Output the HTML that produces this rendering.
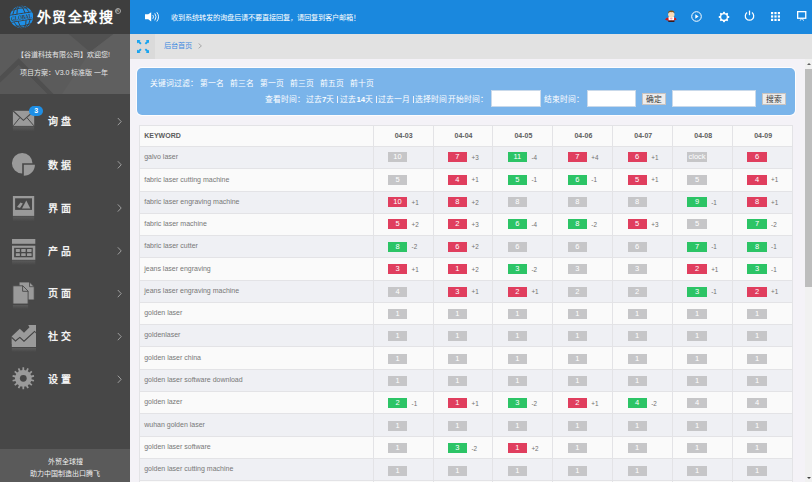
<!DOCTYPE html>
<html lang="zh-CN"><head><meta charset="utf-8"><style>
*{margin:0;padding:0;box-sizing:border-box}
html,body{width:812px;height:482px;overflow:hidden;background:#f4f2f7;font-family:"Liberation Sans",sans-serif;position:relative}
.abs{position:absolute}
/* sidebar */
.logo{position:absolute;left:0;top:0;width:130px;height:34px;background:#3e3e3e}
.logo .t{position:absolute;left:36.5px;top:7.5px;font-family:"Liberation Serif",serif;font-weight:bold;font-size:14px;line-height:20px;color:#fff;letter-spacing:1.6px;white-space:nowrap}
.logo .reg{position:absolute;left:114.5px;top:7.5px;width:6px;height:6px;border:0.8px solid #aaa;border-radius:50%;font-size:4px;line-height:4.5px;text-align:center;color:#aaa;font-weight:bold}
.side{position:absolute;left:0;top:34px;width:130px;height:448px;background:#474747;overflow:hidden}
.uinfo{position:absolute;left:0;top:0;width:130px;height:60px;background:#5b5b5b;overflow:hidden}
.uinfo .l{position:absolute;left:0;width:130px;text-align:center;font-size:7px;color:#e6e6e6;white-space:nowrap}
.menu{position:absolute;left:0;width:130px;height:43px}
.menu .ico{position:absolute;left:12px;top:10px;width:24px;height:24px}
.menu .tx{position:absolute;left:48px;top:15px;font-size:10px;color:#f2f2f2;letter-spacing:3px;white-space:nowrap;font-weight:bold}
.menu .chev{position:absolute;left:116px;top:18px;width:6px;height:8px}
.sfoot{position:absolute;left:0;top:415px;width:130px;height:33px;background:#5a5a5a}
.sfoot .l{position:absolute;left:0;width:130px;text-align:center;font-size:7px;color:#f0f0f0;white-space:nowrap}
.badge3{position:absolute;left:29.1px;top:105.6px;width:14px;height:10.4px;border-radius:5.2px;background:#1e8fe6;color:#fff;font-size:7px;text-align:center;line-height:10.4px;font-weight:bold}
/* header */
.hdrbar{position:absolute;left:130px;top:0;width:682px;height:34px;background:#1a88de}
.notice{position:absolute;left:41px;top:11.5px;font-size:7.2px;color:#fff;white-space:nowrap}
.crumb{position:absolute;left:130px;top:34px;width:682px;height:25px;background:#e2e2e2}
.crumb .ib{position:absolute;left:0;top:0;width:25px;height:25px;background:#dadada}
.crumb .tx{position:absolute;left:34px;top:6.4px;font-size:7.2px;color:#3d8ae0;white-space:nowrap}
/* panel */
.panel{position:absolute;left:137.4px;top:68.4px;width:657.6px;height:47px;background:#7ab4ea;border-radius:5px;box-shadow:0 0 0 1px rgba(255,255,255,0.85)}
.pt{position:absolute;font-size:7.8px;line-height:11.2px;color:#fff;white-space:nowrap}
.pt b{font-weight:bold}
.inp{position:absolute;background:#fff;border:1px solid #c9d9ea}
.btn{position:absolute;background:#ececec;border:1px solid #c9c3c0;font-size:7.8px;color:#3a3a3a;text-align:center;line-height:9.6px;padding-top:1.3px}
/* table */
.table{position:absolute;left:138.6px;top:0;width:653px;height:482px}
.trow{position:absolute;left:0;width:654px;border-top:1px solid #e3e3e6;border-left:1px solid #e3e3e6;border-right:1px solid #e3e3e6}
.trow.hdr{background:#fafafa}
.trow.odd{background:#eff0f4}
.trow.even{background:#fafafa}
.kw{position:absolute;left:4.6px;top:-1.6px;bottom:0;display:flex;align-items:center;font-size:7px;color:#777;white-space:nowrap}
.kwh{font-weight:bold;color:#5c5c5c;top:-0.6px}
.dc{position:absolute;top:-1px;bottom:0;width:60px;border-left:1px solid #e3e3e6}
.dh{position:absolute;left:0;width:60px;top:0;bottom:0;display:flex;align-items:center;justify-content:center;font-size:7px;font-weight:bold;color:#5c5c5c}
.b{position:absolute;left:14.3px;top:6px;width:19.2px;height:10px;font-size:7.5px;color:#fff;text-align:center;line-height:10px}
.b.r{background:#e03e5e}
.b.G{background:#2cc466}
.b.g{background:#c6c6c8}
.dl{position:absolute;left:38px;top:6.8px;font-size:6.3px;color:#707070;line-height:10.4px}

/* scrollbar */
.sb{position:absolute;left:804.5px;top:59px;width:7.5px;height:423px;background:#f1f1f1;overflow:hidden}
.sbthumb{position:absolute;left:0.8px;top:10px;width:8px;height:218px;background:#bdbdbd}
.sbup{position:absolute;left:2.5px;top:3.8px;width:0;height:0;border-left:2.6px solid transparent;border-right:2.6px solid transparent;border-bottom:2.8px solid #606060}
.sbdn{position:absolute;left:2.5px;top:417.8px;width:0;height:0;border-left:2.6px solid transparent;border-right:2.6px solid transparent;border-top:2.8px solid #404040}

.mtx{position:absolute;left:47.5px;font-size:10px;line-height:14.5px;color:#f2f2f2;letter-spacing:3.5px;white-space:nowrap;font-weight:bold}

.sep{position:absolute;top:96.3px;width:0.9px;height:6.6px;background:#f4f0f6}

</style></head><body>
<div class="logo">
 <svg class="abs" style="left:0;top:0" width="40" height="34" viewBox="0 0 40 34"><defs><clipPath id="gc"><ellipse cx="21.5" cy="17" rx="11.6" ry="11.2"/></clipPath></defs><g transform="rotate(-9 21.5 17)"><ellipse cx="21.5" cy="17" rx="11.6" ry="11.2" fill="#1e90e8"/><g clip-path="url(#gc)" stroke="#3e3e3e" stroke-width="0.9" fill="none"><path d="M8 9.5 Q21.5 6.5 35 9.5"/><path d="M8 24.5 Q21.5 27.5 35 24.5"/><path d="M8 13.6 H35"/><path d="M8 20.6 H35"/><ellipse cx="21.5" cy="17" rx="4.2" ry="11.2"/><ellipse cx="21.5" cy="17" rx="8.6" ry="11.2"/></g><rect x="9" y="14" width="25" height="6.2" fill="#1e90e8" clip-path="url(#gc)"/><text x="21.5" y="19.6" font-size="6.6" font-family="Liberation Serif" font-weight="bold" text-anchor="middle" fill="#3e3e3e" textLength="21" lengthAdjust="spacingAndGlyphs">GLOBAL</text></g></svg>
 <div class="t">外贸全球搜</div><div class="reg">R</div>
</div>
<div class="side">
 <div class="uinfo">
  <svg class="abs" style="left:0;top:0" width="130" height="60" viewBox="0 34 130 60"><rect x="0" y="34" width="130" height="60" fill="#5b5b5b"/><polygon points="68.7,34 113.6,34 90,52" fill="#525252"/><polygon points="113.6,34 130,34 130,94 62,94 90,52" fill="#5f5f5f"/><polygon points="0,76.3 18.7,58.3 53.5,94 47,94 18.7,65 0,83" fill="#4f4f4f"/><polygon points="0,83 18.7,65 47,94 0,94" fill="#585858"/></svg>
  <div class="l" style="top:15px;left:-1.6px">【谷道科技有限公司】欢迎您!</div>
  <div class="l" style="top:33px;left:-0.8px">项目方案：V3.0 标准版 一年</div>
 </div>
 <div class="sfoot">
  <div class="l" style="top:7px">外贸全球搜</div>
  <div class="l" style="top:19px">助力中国制造出口腾飞</div>
 </div>
</div>
<svg class="abs" style="left:0;top:0" width="130" height="482" viewBox="0 0 130 482">
<defs><linearGradient id="rf" x1="0" y1="0" x2="0" y2="1"><stop offset="0" stop-color="#5a5a5a"/><stop offset="1" stop-color="#474747"/></linearGradient></defs>
<!-- envelope -->
<rect x="12.9" y="110.8" width="21.3" height="15.1" fill="#9a9a9a"/>
<path d="M13.2 111 L23.4 120.3 L33.9 111" stroke="#474747" stroke-width="1.1" fill="none"/>
<path d="M13.2 125.8 L20 117.5 M33.9 125.8 L26.8 117.5" stroke="#474747" stroke-width="1" fill="none"/>
<rect x="12.9" y="126.5" width="21.3" height="5" fill="url(#rf)"/>
<!-- pie -->
<path d="M22.2 163.2 V173.5 A10.3 10.3 0 1 1 32.5 163.2 Z" fill="#9a9a9a"/>
<path d="M23.8 164.7 H34.9 A11.1 11.1 0 0 1 23.8 175.8 Z" fill="#9a9a9a"/>
<!-- picture -->
<rect x="12.9" y="196" width="21.3" height="19.9" fill="#9a9a9a"/>
<rect x="15.1" y="198.3" width="16.9" height="11.6" fill="#474747"/>
<path d="M17 207 L20.5 202.5 L22.8 203.5 L20 208 Z" fill="#9a9a9a"/>
<path d="M22 208.4 L26.3 200.4 L30.3 208.4 Z" fill="#9a9a9a"/>
<rect x="12.9" y="216.5" width="21.3" height="5" fill="url(#rf)"/>
<!-- calendar -->
<rect x="12" y="239" width="23.3" height="4.8" fill="#9a9a9a"/>
<rect x="12" y="245.7" width="23.3" height="14.1" fill="#9a9a9a"/>
<rect x="14.1" y="247.8" width="18.7" height="9.5" fill="#474747"/>
<g fill="#9a9a9a"><rect x="15.8" y="249" width="4.1" height="2.9" rx="0.6"/><rect x="21.2" y="249" width="4.5" height="2.9" rx="0.6"/><rect x="27" y="249" width="4.6" height="2.9" rx="0.6"/>
<rect x="15.8" y="253.2" width="4.1" height="2.9" rx="0.6"/><rect x="21.2" y="253.2" width="4.5" height="2.9" rx="0.6"/><rect x="27" y="253.2" width="4.6" height="2.9" rx="0.6"/></g>
<rect x="12" y="260.5" width="23.3" height="4.5" fill="url(#rf)"/>
<!-- docs -->
<path d="M19.1 282 H29.5 L34.2 286.7 V299.9 H19.1 Z" fill="#9a9a9a" stroke="#474747" stroke-width="0.8"/>
<path d="M29.5 282 V286.7 H34.2" fill="none" stroke="#474747" stroke-width="0.8"/>
<path d="M12.9 285.8 H22.8 L28.1 291.1 V304 H12.9 Z" fill="#9a9a9a" stroke="#474747" stroke-width="0.9"/>
<path d="M22.6 285.8 V291.3 H28.1" fill="none" stroke="#474747" stroke-width="0.9"/>
<rect x="12.9" y="305" width="15.2" height="4" fill="url(#rf)"/>
<!-- chart -->
<path d="M11.8 336.2 L19.8 328.8 L24 332.8 L29.5 327.2 L28.2 325.1 H36 V332.2 L34.6 331.1 L24 341 L19.8 337 L11.8 344 Z" fill="#9a9a9a"/>
<path d="M11.8 338.5 L15.5 341.2 L19.8 337.5 L24 341.5 L34.6 331.8 L36 333.4 V347 H11.8 Z" fill="#9a9a9a"/>
<path d="M11.8 337.5 L15.5 341 L19.8 337.4 L24 341.2 L35 331.2" stroke="#474747" stroke-width="1.1" fill="none"/>
<rect x="11.8" y="348" width="24.2" height="4" fill="url(#rf)"/>
<!-- gear -->
<path d="M21.46 370.21 L22.36 370.05 L22.47 367.33 L24.13 367.33 L24.24 370.05 L25.16 370.21 L26.03 370.46 L27.31 368.06 L28.81 368.78 L27.72 371.28 L28.48 371.82 L29.16 372.43 L31.36 370.81 L32.39 372.11 L30.33 373.89 L30.78 374.71 L31.13 375.55 L33.81 375.05 L34.18 376.67 L31.55 377.38 L31.60 378.31 L31.55 379.22 L34.18 379.93 L33.81 381.55 L31.13 381.05 L30.77 381.91 L30.33 382.71 L32.39 384.49 L31.36 385.79 L29.16 384.17 L28.47 384.79 L27.72 385.32 L28.81 387.82 L27.31 388.54 L26.03 386.14 L25.14 386.39 L24.24 386.55 L24.13 389.27 L22.47 389.27 L22.36 386.55 L21.44 386.39 L20.57 386.14 L19.29 388.54 L17.79 387.82 L18.88 385.32 L18.12 384.78 L17.44 384.17 L15.24 385.79 L14.21 384.49 L16.27 382.71 L15.82 381.89 L15.47 381.05 L12.79 381.55 L12.42 379.93 L15.05 379.22 L15.00 378.29 L15.05 377.38 L12.42 376.67 L12.79 375.05 L15.47 375.55 L15.83 374.69 L16.27 373.89 L14.21 372.11 L15.24 370.81 L17.44 372.43 L18.13 371.81 L18.88 371.28 L17.79 368.78 L19.29 368.06 L20.57 370.46Z" fill="#9a9a9a"/>
<circle cx="23.3" cy="378.3" r="3.4" fill="#474747"/>
<!-- chevrons -->
<path d="M117.8 118.0 L121.2 121.6 L117.8 125.2" stroke="#a8a8a8" stroke-width="0.9" fill="none"/><path d="M117.8 161.2 L121.2 164.8 L117.8 168.4" stroke="#a8a8a8" stroke-width="0.9" fill="none"/><path d="M117.8 204.4 L121.2 208.0 L117.8 211.6" stroke="#a8a8a8" stroke-width="0.9" fill="none"/><path d="M117.8 247.3 L121.2 250.9 L117.8 254.5" stroke="#a8a8a8" stroke-width="0.9" fill="none"/><path d="M117.8 290.0 L121.2 293.6 L117.8 297.2" stroke="#a8a8a8" stroke-width="0.9" fill="none"/><path d="M117.8 333.0 L121.2 336.6 L117.8 340.2" stroke="#a8a8a8" stroke-width="0.9" fill="none"/><path d="M117.8 375.7 L121.2 379.3 L117.8 382.9" stroke="#a8a8a8" stroke-width="0.9" fill="none"/>
</svg>
<div class="badge3">3</div>
<div class="mtx" style="top:115.2px">询盘</div><div class="mtx" style="top:158.5px">数据</div><div class="mtx" style="top:201.7px">界面</div><div class="mtx" style="top:244.6px">产品</div><div class="mtx" style="top:287.3px">页面</div><div class="mtx" style="top:330.3px">社交</div><div class="mtx" style="top:373.0px">设置</div>

<div class="hdrbar">
 <svg class="abs" style="left:15px;top:12px" width="15" height="10" viewBox="0 0 15 10"><path d="M0 2.3 H3.2 L6.2 0.3 V9.4 L3.2 7.2 H0 Z" fill="#fff"/><path d="M7.8 3 Q9.2 4.8 7.8 6.8" stroke="#fff" stroke-width="0.9" fill="none"/><path d="M9.8 1.3 Q12.3 4.8 9.8 8.4" stroke="#fff" stroke-width="0.9" fill="none"/><path d="M11.8 0.2 Q15.3 4.8 11.8 9.5" stroke="#fff" stroke-width="0.9" fill="none"/></svg>
 <div class="notice">收到系统转发的询盘后请不要直接回复，请回复到客户邮箱！</div>
 <svg class="abs" style="left:535px;top:9.5px" width="12" height="12" viewBox="0 0 12 12"><path d="M3 11 Q6.3 8.5 9.8 11 L9 12 H3.6 Z" fill="#3a1a1a"/><path d="M0 9.6 Q1.5 7.3 3.5 7.4 L9 7.4 Q11 7.3 11.6 9.4 Q10 10.6 8.5 10.5 Q6.3 9.6 4 10.6 Q1.5 10.8 0 9.6Z" fill="#d01818"/><rect x="3.5" y="6.4" width="5.6" height="3.9" rx="1" fill="#fff"/><ellipse cx="6.3" cy="8.4" rx="1.3" ry="1" fill="#f4a8b8"/><ellipse cx="6.3" cy="4.6" rx="3.2" ry="2.9" fill="#fbdcb8"/><path d="M3 3.2 Q3 0.3 6.3 0.4 Q9.6 0.3 9.5 3 Q8 1.8 6.3 2.2 Q4.5 1.8 3 3.2Z" fill="#8b5516"/></svg>
 <svg class="abs" style="left:561px;top:11px" width="11" height="11" viewBox="0 0 11 11"><circle cx="5.5" cy="5.5" r="4.8" stroke="#fff" stroke-width="1" fill="none"/><path d="M4.3 3.2 L7.6 5.5 L4.3 7.8 Z" fill="#fff"/></svg>
 <svg class="abs" style="left:588px;top:10.8px" width="12" height="12" viewBox="0 0 12 12"><circle cx="6" cy="6" r="3.45" stroke="#fff" stroke-width="1.35" fill="none"/><path d="M4.74 2.20 L5.37 0.74 L6.63 0.74 L7.26 2.20ZM7.80 2.43 L9.27 1.83 L10.17 2.73 L9.57 4.20ZM9.80 4.74 L11.26 5.37 L11.26 6.63 L9.80 7.26ZM9.57 7.80 L10.17 9.27 L9.27 10.17 L7.80 9.57ZM7.26 9.80 L6.63 11.26 L5.37 11.26 L4.74 9.80ZM4.20 9.57 L2.73 10.17 L1.83 9.27 L2.43 7.80ZM2.20 7.26 L0.74 6.63 L0.74 5.37 L2.20 4.74ZM2.43 4.20 L1.83 2.73 L2.73 1.83 L4.20 2.43Z" fill="#fff"/></svg>
 <svg class="abs" style="left:614px;top:9.9px" width="11" height="11" viewBox="0 0 11 11"><path d="M3.1 2.6 A4.2 4.2 0 1 0 7.9 2.6" stroke="#fff" stroke-width="1.25" fill="none"/><path d="M5.5 0.6 V5.2" stroke="#fff" stroke-width="1.25"/></svg>
 <svg class="abs" style="left:641px;top:12px" width="9" height="9" viewBox="0 0 9 9"><g fill="#fff"><rect x="0" y="0" width="2.2" height="2.2"/><rect x="3.4" y="0" width="2.2" height="2.2"/><rect x="6.8" y="0" width="2.2" height="2.2"/><rect x="0" y="3.4" width="2.2" height="2.2"/><rect x="3.4" y="3.4" width="2.2" height="2.2"/><rect x="6.8" y="3.4" width="2.2" height="2.2"/><rect x="0" y="6.8" width="2.2" height="2.2"/><rect x="3.4" y="6.8" width="2.2" height="2.2"/><rect x="6.8" y="6.8" width="2.2" height="2.2"/></g></svg>
 <svg class="abs" style="left:666.5px;top:11px" width="10" height="10" viewBox="0 0 10 10"><rect x="0.65" y="0.65" width="8.1" height="6.6" stroke="#fff" stroke-width="1.3" fill="none"/><path d="M2.8 9.6 L4.9 7.6 L7 9.6" stroke="#fff" stroke-width="0.9" fill="none"/></svg>
</div>
<div class="crumb">
 <div class="ib"><svg class="abs" style="left:6.7px;top:5.8px" width="12.5" height="13" viewBox="0 0 12.5 13"><g fill="#18a4f0"><path d="M0 0 H3.6 L2.5 1.1 L4.6 3.3 L3.3 4.6 L1.1 2.5 L0 3.6 Z"/><path d="M0 0 H3.6 L2.5 1.1 L4.6 3.3 L3.3 4.6 L1.1 2.5 L0 3.6 Z" transform="translate(12.3 0) scale(-1 1)"/><path d="M0 0 H3.6 L2.5 1.1 L4.6 3.3 L3.3 4.6 L1.1 2.5 L0 3.6 Z" transform="translate(0 13) scale(1 -1)"/><path d="M0 0 H3.6 L2.5 1.1 L4.6 3.3 L3.3 4.6 L1.1 2.5 L0 3.6 Z" transform="translate(12.3 13) scale(-1 -1)"/></g></svg></div>
 <div class="tx">后台首页</div><svg class="abs" style="left:67.5px;top:9.2px" width="5" height="6" viewBox="0 0 5 6"><path d="M0.6 0.5 L3.4 2.9 L0.6 5.3" stroke="#9a9a9a" stroke-width="0.8" fill="none"/></svg>
</div>
<div class="panel"></div>
<div class="sep" style="left:337.3px"></div><div class="sep" style="left:375.6px"></div><div class="sep" style="left:413.3px"></div>
<div class="pt" style="left:149.6px;top:77.6px">关键词过滤：</div>
<div class="pt" style="left:200px;top:77.6px">第一名</div>
<div class="pt" style="left:230px;top:77.6px">前三名</div>
<div class="pt" style="left:260px;top:77.6px">第一页</div>
<div class="pt" style="left:290px;top:77.6px">前三页</div>
<div class="pt" style="left:320px;top:77.6px">前五页</div>
<div class="pt" style="left:350px;top:77.6px">前十页</div>
<div class="pt" style="left:265px;top:94.0px">查看时间：</div>
<div class="pt" style="left:306px;top:94.0px">过去<b>7</b>天</div>
<div class="pt" style="left:340.4px;top:94.0px">过去<b>14</b>天</div>
<div class="pt" style="left:378.4px;top:94.0px">过去一月</div>
<div class="pt" style="left:415.3px;top:94.0px">选择时间</div>
<div class="pt" style="left:448.4px;top:94.0px">开始时间：</div>
<div class="pt" style="left:543.8px;top:94.0px">结束时间：</div>
<div class="inp" style="left:491.4px;top:90.2px;width:49.3px;height:17.2px"></div>
<div class="inp" style="left:586.8px;top:90.2px;width:49.3px;height:17.2px"></div>
<div class="inp" style="left:671.6px;top:90.2px;width:84.6px;height:17.2px"></div>
<div class="btn" style="left:641.8px;top:93.2px;width:24.4px;height:11.6px">确定</div>
<div class="btn" style="left:761.8px;top:93.2px;width:24.6px;height:11.6px">搜索</div>

<div class="table">
<div class="trow hdr" style="top:124.6px;height:21.4px"><div class="kw kwh">KEYWORD</div><div class="dc" style="left:233.0px"><span class="dh">04-03</span></div><div class="dc" style="left:292.92px"><span class="dh">04-04</span></div><div class="dc" style="left:352.84000000000003px"><span class="dh">04-05</span></div><div class="dc" style="left:412.76px"><span class="dh">04-06</span></div><div class="dc" style="left:472.68px"><span class="dh">04-07</span></div><div class="dc" style="left:532.6px"><span class="dh">04-08</span></div><div class="dc" style="left:592.52px"><span class="dh">04-09</span></div></div><div class="trow odd" style="top:146.00px;height:22.27px"><div class="kw">galvo laser</div><div class="dc" style="left:233.0px"><span class="b g" style="top:6.40px">10</span></div><div class="dc" style="left:292.92px"><span class="b r" style="top:6.40px">7</span><span class="dl" style="top:7.00px">+3</span></div><div class="dc" style="left:352.84000000000003px"><span class="b G" style="top:6.40px">11</span><span class="dl" style="top:7.00px">-4</span></div><div class="dc" style="left:412.76px"><span class="b r" style="top:6.40px">7</span><span class="dl" style="top:7.00px">+4</span></div><div class="dc" style="left:472.68px"><span class="b r" style="top:6.40px">6</span><span class="dl" style="top:7.00px">+1</span></div><div class="dc" style="left:532.6px"><span class="b g" style="top:6.40px">clock</span></div><div class="dc" style="left:592.52px"><span class="b r" style="top:6.40px">6</span></div></div><div class="trow even" style="top:168.27px;height:22.27px"><div class="kw">fabric laser cutting machine</div><div class="dc" style="left:233.0px"><span class="b g" style="top:6.50px">5</span></div><div class="dc" style="left:292.92px"><span class="b r" style="top:6.50px">4</span><span class="dl" style="top:7.10px">+1</span></div><div class="dc" style="left:352.84000000000003px"><span class="b G" style="top:6.50px">5</span><span class="dl" style="top:7.10px">-1</span></div><div class="dc" style="left:412.76px"><span class="b G" style="top:6.50px">6</span><span class="dl" style="top:7.10px">-1</span></div><div class="dc" style="left:472.68px"><span class="b r" style="top:6.50px">5</span><span class="dl" style="top:7.10px">+1</span></div><div class="dc" style="left:532.6px"><span class="b g" style="top:6.50px">5</span></div><div class="dc" style="left:592.52px"><span class="b r" style="top:6.50px">4</span><span class="dl" style="top:7.10px">+1</span></div></div><div class="trow odd" style="top:190.54px;height:22.27px"><div class="kw">fabric laser engraving machine</div><div class="dc" style="left:233.0px"><span class="b r" style="top:6.60px">10</span><span class="dl" style="top:7.20px">+1</span></div><div class="dc" style="left:292.92px"><span class="b r" style="top:6.60px">8</span><span class="dl" style="top:7.20px">+2</span></div><div class="dc" style="left:352.84000000000003px"><span class="b g" style="top:6.60px">8</span></div><div class="dc" style="left:412.76px"><span class="b g" style="top:6.60px">8</span></div><div class="dc" style="left:472.68px"><span class="b g" style="top:6.60px">8</span></div><div class="dc" style="left:532.6px"><span class="b G" style="top:6.60px">9</span><span class="dl" style="top:7.20px">-1</span></div><div class="dc" style="left:592.52px"><span class="b r" style="top:6.60px">8</span><span class="dl" style="top:7.20px">+1</span></div></div><div class="trow even" style="top:212.81px;height:22.27px"><div class="kw">fabric laser machine</div><div class="dc" style="left:233.0px"><span class="b r" style="top:6.70px">5</span><span class="dl" style="top:7.30px">+2</span></div><div class="dc" style="left:292.92px"><span class="b r" style="top:6.70px">2</span><span class="dl" style="top:7.30px">+3</span></div><div class="dc" style="left:352.84000000000003px"><span class="b G" style="top:6.70px">6</span><span class="dl" style="top:7.30px">-4</span></div><div class="dc" style="left:412.76px"><span class="b G" style="top:6.70px">8</span><span class="dl" style="top:7.30px">-2</span></div><div class="dc" style="left:472.68px"><span class="b r" style="top:6.70px">5</span><span class="dl" style="top:7.30px">+3</span></div><div class="dc" style="left:532.6px"><span class="b g" style="top:6.70px">5</span></div><div class="dc" style="left:592.52px"><span class="b G" style="top:6.70px">7</span><span class="dl" style="top:7.30px">-2</span></div></div><div class="trow odd" style="top:235.08px;height:22.27px"><div class="kw">fabric laser cutter</div><div class="dc" style="left:233.0px"><span class="b G" style="top:6.80px">8</span><span class="dl" style="top:7.40px">-2</span></div><div class="dc" style="left:292.92px"><span class="b r" style="top:6.80px">6</span><span class="dl" style="top:7.40px">+2</span></div><div class="dc" style="left:352.84000000000003px"><span class="b g" style="top:6.80px">6</span></div><div class="dc" style="left:412.76px"><span class="b g" style="top:6.80px">6</span></div><div class="dc" style="left:472.68px"><span class="b g" style="top:6.80px">6</span></div><div class="dc" style="left:532.6px"><span class="b G" style="top:6.80px">7</span><span class="dl" style="top:7.40px">-1</span></div><div class="dc" style="left:592.52px"><span class="b G" style="top:6.80px">8</span><span class="dl" style="top:7.40px">-1</span></div></div><div class="trow even" style="top:257.35px;height:22.27px"><div class="kw">jeans laser engraving</div><div class="dc" style="left:233.0px"><span class="b r" style="top:6.90px">3</span><span class="dl" style="top:7.50px">+1</span></div><div class="dc" style="left:292.92px"><span class="b r" style="top:6.90px">1</span><span class="dl" style="top:7.50px">+2</span></div><div class="dc" style="left:352.84000000000003px"><span class="b G" style="top:6.90px">3</span><span class="dl" style="top:7.50px">-2</span></div><div class="dc" style="left:412.76px"><span class="b g" style="top:6.90px">3</span></div><div class="dc" style="left:472.68px"><span class="b g" style="top:6.90px">3</span></div><div class="dc" style="left:532.6px"><span class="b r" style="top:6.90px">2</span><span class="dl" style="top:7.50px">+1</span></div><div class="dc" style="left:592.52px"><span class="b G" style="top:6.90px">3</span><span class="dl" style="top:7.50px">-1</span></div></div><div class="trow odd" style="top:279.62px;height:22.27px"><div class="kw">jeans laser engraving machine</div><div class="dc" style="left:233.0px"><span class="b g" style="top:7.00px">4</span></div><div class="dc" style="left:292.92px"><span class="b r" style="top:7.00px">3</span><span class="dl" style="top:7.60px">+1</span></div><div class="dc" style="left:352.84000000000003px"><span class="b r" style="top:7.00px">2</span><span class="dl" style="top:7.60px">+1</span></div><div class="dc" style="left:412.76px"><span class="b g" style="top:7.00px">2</span></div><div class="dc" style="left:472.68px"><span class="b g" style="top:7.00px">2</span></div><div class="dc" style="left:532.6px"><span class="b G" style="top:7.00px">3</span><span class="dl" style="top:7.60px">-1</span></div><div class="dc" style="left:592.52px"><span class="b r" style="top:7.00px">2</span><span class="dl" style="top:7.60px">+1</span></div></div><div class="trow even" style="top:301.89px;height:22.27px"><div class="kw">golden laser</div><div class="dc" style="left:233.0px"><span class="b g" style="top:7.10px">1</span></div><div class="dc" style="left:292.92px"><span class="b g" style="top:7.10px">1</span></div><div class="dc" style="left:352.84000000000003px"><span class="b g" style="top:7.10px">1</span></div><div class="dc" style="left:412.76px"><span class="b g" style="top:7.10px">1</span></div><div class="dc" style="left:472.68px"><span class="b g" style="top:7.10px">1</span></div><div class="dc" style="left:532.6px"><span class="b g" style="top:7.10px">1</span></div><div class="dc" style="left:592.52px"><span class="b g" style="top:7.10px">1</span></div></div><div class="trow odd" style="top:324.16px;height:22.27px"><div class="kw">goldenlaser</div><div class="dc" style="left:233.0px"><span class="b g" style="top:7.20px">1</span></div><div class="dc" style="left:292.92px"><span class="b g" style="top:7.20px">1</span></div><div class="dc" style="left:352.84000000000003px"><span class="b g" style="top:7.20px">1</span></div><div class="dc" style="left:412.76px"><span class="b g" style="top:7.20px">1</span></div><div class="dc" style="left:472.68px"><span class="b g" style="top:7.20px">1</span></div><div class="dc" style="left:532.6px"><span class="b g" style="top:7.20px">1</span></div><div class="dc" style="left:592.52px"><span class="b g" style="top:7.20px">1</span></div></div><div class="trow even" style="top:346.43px;height:22.27px"><div class="kw">golden laser china</div><div class="dc" style="left:233.0px"><span class="b g" style="top:7.30px">1</span></div><div class="dc" style="left:292.92px"><span class="b g" style="top:7.30px">1</span></div><div class="dc" style="left:352.84000000000003px"><span class="b g" style="top:7.30px">1</span></div><div class="dc" style="left:412.76px"><span class="b g" style="top:7.30px">1</span></div><div class="dc" style="left:472.68px"><span class="b g" style="top:7.30px">1</span></div><div class="dc" style="left:532.6px"><span class="b g" style="top:7.30px">1</span></div><div class="dc" style="left:592.52px"><span class="b g" style="top:7.30px">1</span></div></div><div class="trow odd" style="top:368.70px;height:22.27px"><div class="kw">golden laser software download</div><div class="dc" style="left:233.0px"><span class="b g" style="top:7.40px">1</span></div><div class="dc" style="left:292.92px"><span class="b g" style="top:7.40px">1</span></div><div class="dc" style="left:352.84000000000003px"><span class="b g" style="top:7.40px">1</span></div><div class="dc" style="left:412.76px"><span class="b g" style="top:7.40px">1</span></div><div class="dc" style="left:472.68px"><span class="b g" style="top:7.40px">1</span></div><div class="dc" style="left:532.6px"><span class="b g" style="top:7.40px">1</span></div><div class="dc" style="left:592.52px"><span class="b g" style="top:7.40px">1</span></div></div><div class="trow even" style="top:390.97px;height:22.27px"><div class="kw">golden lazer</div><div class="dc" style="left:233.0px"><span class="b G" style="top:7.50px">2</span><span class="dl" style="top:8.10px">-1</span></div><div class="dc" style="left:292.92px"><span class="b r" style="top:7.50px">1</span><span class="dl" style="top:8.10px">+1</span></div><div class="dc" style="left:352.84000000000003px"><span class="b G" style="top:7.50px">3</span><span class="dl" style="top:8.10px">-2</span></div><div class="dc" style="left:412.76px"><span class="b r" style="top:7.50px">2</span><span class="dl" style="top:8.10px">+1</span></div><div class="dc" style="left:472.68px"><span class="b G" style="top:7.50px">4</span><span class="dl" style="top:8.10px">-2</span></div><div class="dc" style="left:532.6px"><span class="b g" style="top:7.50px">4</span></div><div class="dc" style="left:592.52px"><span class="b g" style="top:7.50px">4</span></div></div><div class="trow odd" style="top:413.24px;height:22.27px"><div class="kw">wuhan golden laser</div><div class="dc" style="left:233.0px"><span class="b g" style="top:7.60px">1</span></div><div class="dc" style="left:292.92px"><span class="b g" style="top:7.60px">1</span></div><div class="dc" style="left:352.84000000000003px"><span class="b g" style="top:7.60px">1</span></div><div class="dc" style="left:412.76px"><span class="b g" style="top:7.60px">1</span></div><div class="dc" style="left:472.68px"><span class="b g" style="top:7.60px">1</span></div><div class="dc" style="left:532.6px"><span class="b g" style="top:7.60px">1</span></div><div class="dc" style="left:592.52px"><span class="b g" style="top:7.60px">1</span></div></div><div class="trow even" style="top:435.51px;height:22.27px"><div class="kw">golden laser software</div><div class="dc" style="left:233.0px"><span class="b g" style="top:7.70px">1</span></div><div class="dc" style="left:292.92px"><span class="b G" style="top:7.70px">3</span><span class="dl" style="top:8.30px">-2</span></div><div class="dc" style="left:352.84000000000003px"><span class="b r" style="top:7.70px">1</span><span class="dl" style="top:8.30px">+2</span></div><div class="dc" style="left:412.76px"><span class="b g" style="top:7.70px">1</span></div><div class="dc" style="left:472.68px"><span class="b g" style="top:7.70px">1</span></div><div class="dc" style="left:532.6px"><span class="b g" style="top:7.70px">1</span></div><div class="dc" style="left:592.52px"><span class="b g" style="top:7.70px">1</span></div></div><div class="trow odd" style="top:457.78px;height:22.27px"><div class="kw">golden laser cutting machine</div><div class="dc" style="left:233.0px"><span class="b g" style="top:7.80px">1</span></div><div class="dc" style="left:292.92px"><span class="b g" style="top:7.80px">1</span></div><div class="dc" style="left:352.84000000000003px"><span class="b g" style="top:7.80px">1</span></div><div class="dc" style="left:412.76px"><span class="b g" style="top:7.80px">1</span></div><div class="dc" style="left:472.68px"><span class="b g" style="top:7.80px">1</span></div><div class="dc" style="left:532.6px"><span class="b g" style="top:7.80px">1</span></div><div class="dc" style="left:592.52px"><span class="b g" style="top:7.80px">1</span></div></div><div class="trow even" style="top:480.05px;height:22.27px"><div class="kw">golden laser marking machine</div><div class="dc" style="left:233.0px"><span class="b g" style="top:7.90px">1</span></div><div class="dc" style="left:292.92px"><span class="b g" style="top:7.90px">1</span></div><div class="dc" style="left:352.84000000000003px"><span class="b g" style="top:7.90px">1</span></div><div class="dc" style="left:412.76px"><span class="b g" style="top:7.90px">1</span></div><div class="dc" style="left:472.68px"><span class="b g" style="top:7.90px">1</span></div><div class="dc" style="left:532.6px"><span class="b g" style="top:7.90px">1</span></div><div class="dc" style="left:592.52px"><span class="b g" style="top:7.90px">1</span></div></div>
</div>
<div class="sb"><div class="sbup"></div><div class="sbthumb"></div><div class="sbdn"></div></div>
</body></html>
